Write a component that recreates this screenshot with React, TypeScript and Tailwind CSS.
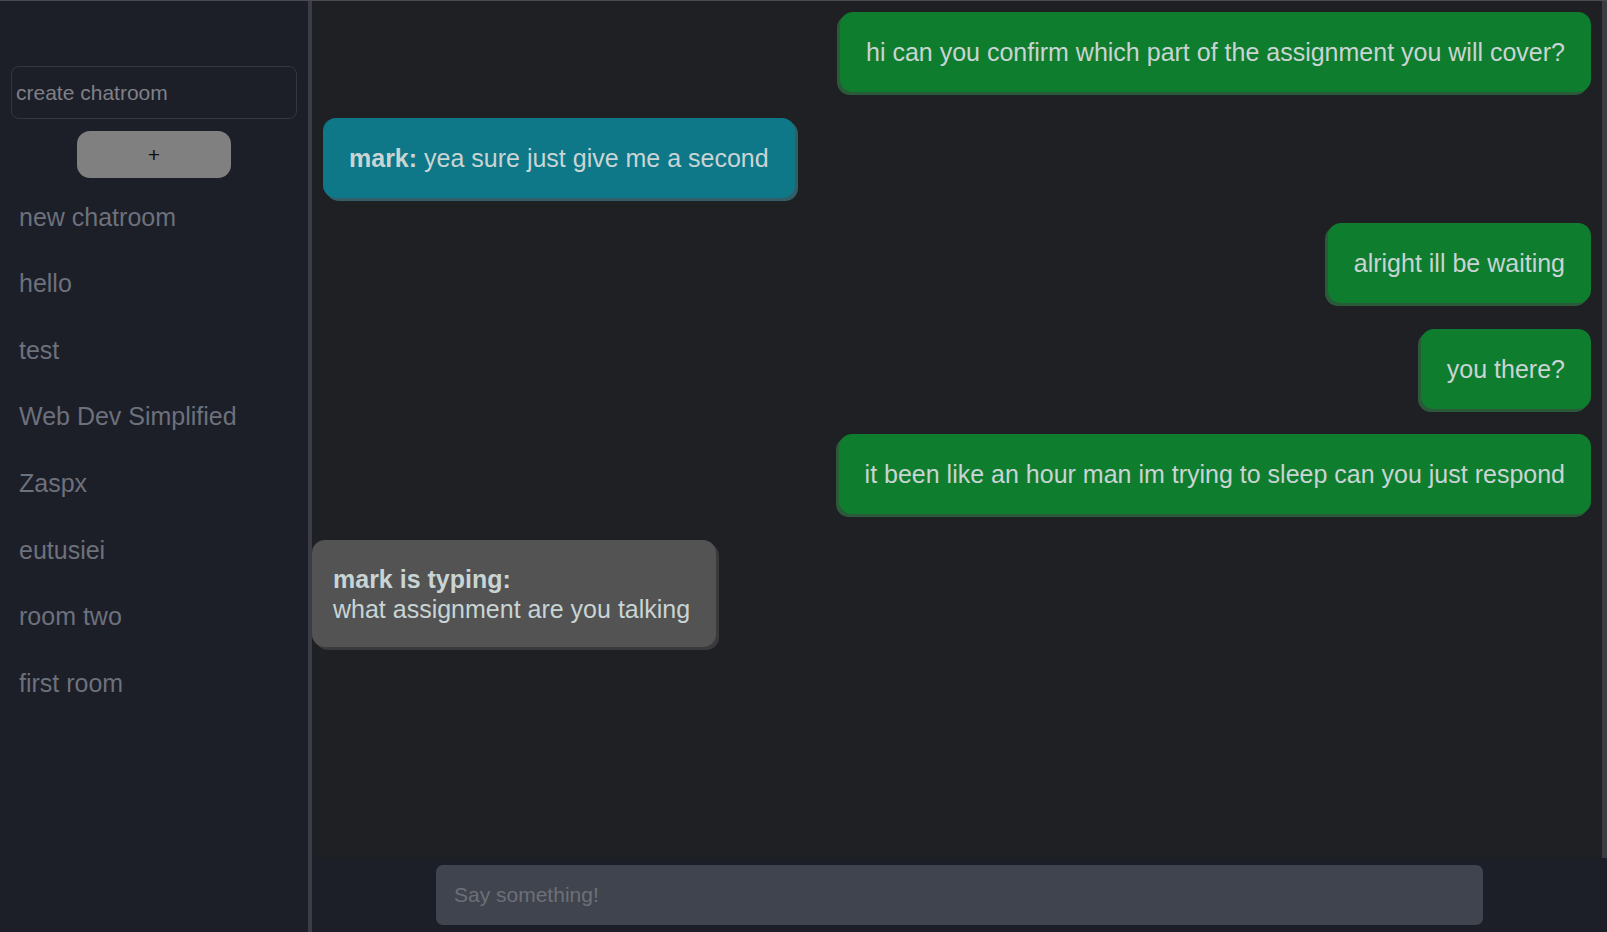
import React from "react";

type Message = {
  id: number;
  text: string;
  author?: string;
  mine: boolean;
};

const rooms = [
  "new chatroom",
  "hello",
  "test",
  "Web Dev Simplified",
  "Zaspx",
  "eutusiei",
  "room two",
  "first room",
];

const messages: Message[] = [
  { id: 1, mine: true, text: "hi can you confirm which part of the assignment you will cover?" },
  { id: 2, mine: false, author: "mark", text: "yea sure just give me a second" },
  { id: 3, mine: true, text: "alright ill be waiting" },
  { id: 4, mine: true, text: "you there?" },
  { id: 5, mine: true, text: "it been like an hour man im trying to sleep can you just respond" },
];

function Sidebar() {
  return (
    <aside className="flex w-[312px] shrink-0 flex-col border-r-4 border-[#3a3c47] bg-[#1c1e28] px-[11px] pt-[65px]">
      <input
        type="text"
        placeholder="create chatroom"
        className="h-[53px] w-full rounded-[8px] border border-[#343642] bg-transparent px-[4px] text-[21px] text-[#c9d4d4] outline-none placeholder:text-[#7f8187]"
      />
      <button
        type="button"
        className="mt-[12px] h-[47px] w-[154px] self-center rounded-[13px] bg-[#808080] text-[21px] leading-none text-[#111]"
      >
        +
      </button>
      <ul className="mt-[6px] flex flex-col">
        {rooms.map((room) => (
          <li
            key={room}
            className="flex h-[66.6px] items-center px-[8px] text-[25px] text-[#6c717c]"
          >
            {room}
          </li>
        ))}
      </ul>
    </aside>
  );
}

function Bubble({ msg }: { msg: Message }) {
  if (msg.mine) {
    return (
      <div className="self-end rounded-[13px] bg-[#0f7d2e] px-[26px] py-[25px] text-[25px] leading-[30px] text-[#c9d4d4] shadow-[-3px_3px_0_#2b5a3b]">
        {msg.text}
      </div>
    );
  }
  return (
    <div className="self-start rounded-[13px] bg-[#0e7788] px-[26px] py-[25px] text-[25px] leading-[30px] text-[#c9d4d4] shadow-[3px_3px_0_#325e67]">
      <span className="font-bold">{msg.author}:</span> {msg.text}
    </div>
  );
}

function ChatPanel() {
  return (
    <main className="flex min-w-0 flex-1 flex-col">
      <div className="flex min-h-0 flex-1 flex-col border-r-[5px] border-[#3c3d42] bg-[#1f2024] pt-[11px]">
        <div className="flex flex-col gap-[25.6px] px-[11px]">
          {messages.map((m) => (
            <Bubble key={m.id} msg={m} />
          ))}
        </div>
        <div className="mt-[26px] self-start rounded-[13px] bg-[#535353] py-[23.5px] pl-[21px] pr-[26px] text-[25px] leading-[30px] text-[#c9d4d4] shadow-[3px_3px_0_#3a3a3c]">
          <div className="font-bold">mark is typing:</div>
          <div>what assignment are you talking</div>
        </div>
      </div>
      <div className="flex h-[74px] shrink-0 justify-center bg-[#1c1e28] pt-[7px]">
        <input
          type="text"
          placeholder="Say something!"
          className="h-[60px] w-[1047px] rounded-[7px] bg-[#40444e] px-[18px] text-[21px] text-[#c9d4d4] outline-none placeholder:text-[#6d7077]"
        />
      </div>
    </main>
  );
}

export default function App() {
  return (
    <div
      className="flex h-[932px] w-full overflow-hidden border-t border-[#4a4b50] bg-[#1f2024]"
      style={{ fontFamily: '"Liberation Sans", Arial, sans-serif' }}
    >
      <Sidebar />
      <ChatPanel />
    </div>
  );
}
